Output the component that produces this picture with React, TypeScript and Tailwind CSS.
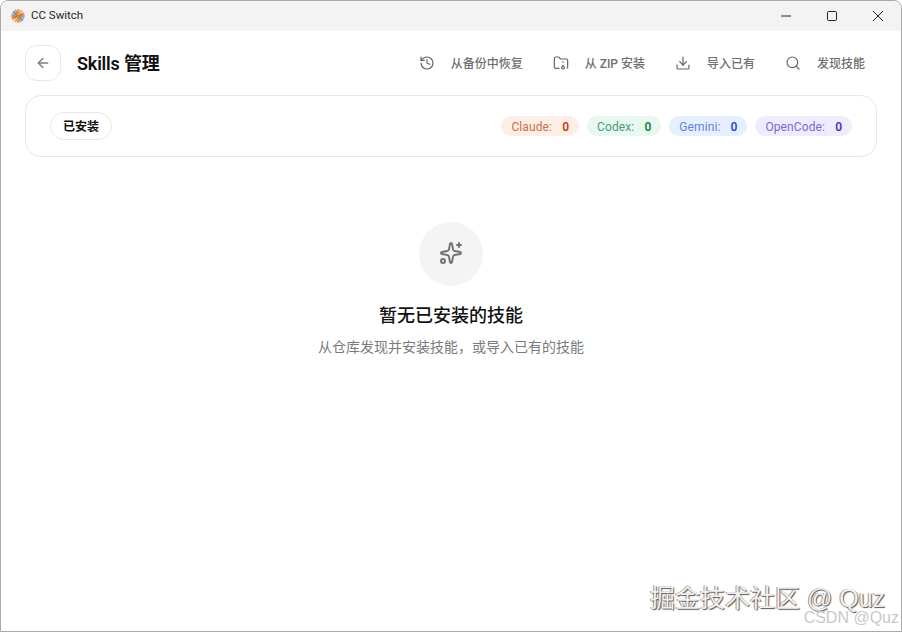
import React from 'react';
import { ArrowLeft, History, FolderArchive, Download, Search, Sparkles } from 'lucide-react';

const actions = [
  { icon: History, label: '从备份中恢复' },
  { icon: FolderArchive, label: '从 ZIP 安装' },
  { icon: Download, label: '导入已有' },
  { icon: Search, label: '发现技能' },
];

const counts = [
  { name: 'Claude', bg: 'bg-[#fdeee6]', label: 'text-[#c9704a]', value: 'text-[#c2410c]' },
  { name: 'Codex', bg: 'bg-[#e8f7ef]', label: 'text-[#4c9f78]', value: 'text-[#15803d]' },
  { name: 'Gemini', bg: 'bg-[#e6effe]', label: 'text-[#5f83da]', value: 'text-[#1d4ed8]' },
  { name: 'OpenCode', bg: 'bg-[#efecfd]', label: 'text-[#7d68d6]', value: 'text-[#4c35b8]' },
];

const Logo = () => {
  const colors = ['#e0803a', '#e8a33d', '#f0b45a', '#d8643a', '#c96a3c', '#7fa7a8', '#4f9da6', '#e0803a'];
  return (
    <svg width="14" height="14" viewBox="0 0 14 14">
      {colors.map((c, i) => (
        <line
          key={i}
          x1="7"
          y1="0.8"
          x2="7"
          y2="13.2"
          stroke={c}
          strokeWidth="1.5"
          strokeLinecap="round"
          transform={`rotate(${i * 22.5} 7 7)`}
        />
      ))}
    </svg>
  );
};

export default function App() {
  return (
    <div className="relative h-[632px] w-[902px] overflow-hidden rounded-t-lg border border-[#a9a9a9] bg-white font-['Roboto','Noto_Sans_CJK_SC',sans-serif]">
      {/* Title bar */}
      <div className="flex h-[30px] items-center justify-between bg-[#f3f3f3]">
        <div className="flex items-center gap-[6px] pl-[10px]">
          <Logo />
          <span className="text-[11.5px] text-[#1f1f1f]">CC Switch</span>
        </div>
        <div className="flex h-full items-center">
          <div className="flex h-full w-[46px] items-center justify-center">
            <svg width="12" height="12" viewBox="0 0 12 12"><path d="M1 6h10" stroke="#222" strokeWidth="1" /></svg>
          </div>
          <div className="flex h-full w-[46px] items-center justify-center">
            <svg width="12" height="12" viewBox="0 0 12 12"><rect x="1.5" y="1.5" width="9" height="9" rx="1.2" fill="none" stroke="#222" strokeWidth="1" /></svg>
          </div>
          <div className="flex h-full w-[46px] items-center justify-center">
            <svg width="12" height="12" viewBox="0 0 12 12"><path d="M1 1l10 10M11 1L1 11" stroke="#222" strokeWidth="1" /></svg>
          </div>
        </div>
      </div>

      <div className="px-6">
        {/* Header */}
        <div className="mt-[14px] flex h-9 items-center justify-between">
          <div className="flex items-center gap-4">
            <div className="flex h-9 w-9 items-center justify-center rounded-xl border border-[#e8e8e8]">
              <ArrowLeft size={16} className="text-[#7b7b7b]" />
            </div>
            <h1 className="pt-px text-lg font-semibold tracking-[-0.01em] text-[#111]">Skills 管理</h1>
          </div>
          <div className="flex items-center gap-[30px] pr-3">
            {actions.map((a) => (
              <div key={a.label} className="flex items-center gap-4 text-xs font-medium text-[#6f6f6f]">
                <a.icon size={16} strokeWidth={1.8} className="shrink-0 text-[#666]" />
                <span className="pt-px">{a.label}</span>
              </div>
            ))}
          </div>
        </div>

        {/* Tabs and counts */}
        <div className="mt-[14px] flex h-[62px] items-center justify-between rounded-2xl border border-[#e6e6e6] px-6">
          <div className="flex h-[28px] w-[62px] items-center justify-center rounded-full border border-[#e8e8e8] pt-px text-xs font-semibold text-[#111]">
            已安装
          </div>
          <div className="flex items-center gap-2">
            {counts.map((c) => (
              <div key={c.name} className={`flex h-5 items-center gap-[10px] rounded-full px-[10px] pt-px text-xs ${c.bg}`}>
                <span className={`tracking-[0.01em] ${c.label}`}>{c.name}:</span>
                <span className={`font-semibold ${c.value}`}>0</span>
              </div>
            ))}
          </div>
        </div>

        {/* Empty state */}
        <div className="mt-[65px] flex flex-col items-center">
          <div className="flex h-16 w-16 items-center justify-center rounded-full bg-[#f4f4f4]">
            <Sparkles size={24} strokeWidth={2} className="-translate-y-px text-[#737373]" />
          </div>
          <h2 className="mt-4 text-lg font-medium leading-7 text-[#111]">暂无已安装的技能</h2>
          <p className="mt-[7px] text-sm leading-5 text-[#7a7a7a]">从仓库发现并安装技能，或导入已有的技能</p>
        </div>
      </div>

      {/* Watermarks */}
      <div className="absolute left-[649px] top-[581px] whitespace-nowrap font-['Liberation_Sans','Noto_Sans_CJK_SC',sans-serif] text-[25px] leading-8 text-[#f0f0f0] [text-shadow:1px_1px_1px_#555,-1px_0_0_#999]">
        掘金技术社区 @ Quz
      </div>
      <div className="absolute right-[2px] top-[607px] font-['Liberation_Sans',sans-serif] text-base leading-5 text-[#c9c9c9]">
        CSDN @Quz
      </div>
    </div>
  );
}
